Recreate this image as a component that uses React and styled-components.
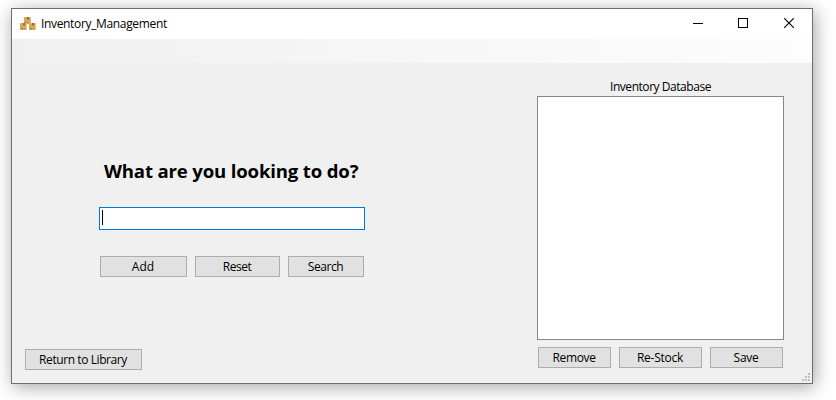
import React from "react";
import styled, { createGlobalStyle } from "styled-components";

const GlobalStyle = createGlobalStyle`
  *, *::before, *::after { box-sizing: border-box; }
  body {
    margin: 0;
    background: #fff;
    overflow: hidden;
    color: #000;
    font: 12px/16px "Open Sans", "Noto Sans", sans-serif;
  }
`;

const Desktop = styled.div`
  width: 836px;
  height: 400px;
  padding: 8px 0 0 11px;
  overflow: hidden;
`;

const Window = styled.main`
  display: flex;
  flex-direction: column;
  width: 802px;
  height: 376px;
  border: 1px solid #6d6e6f;
  background: #f0f0f0;
  box-shadow: 2px 3px 17px rgba(0, 0, 0, 0.36);
`;

const TitleBar = styled.header`
  display: flex;
  align-items: flex-start;
  height: 30px;
  background: #fff;
`;

const AppIcon = styled.svg`
  flex: none;
  width: 16px;
  height: 16px;
  margin: 7px 5px 0 8px;
`;

const Title = styled.span`
  flex: 1;
  padding-top: 7px;
  white-space: nowrap;
  letter-spacing: ${(p) => p.$spacing}px;
`;

const WindowControl = styled.button`
  display: flex;
  align-items: flex-start;
  width: ${(p) => p.$width}px;
  height: 30px;
  padding: 9px 0 0 18px;
  border: 0;
  background: transparent;

  svg { display: block; flex: none; }
`;

const MenuStrip = styled.nav`
  height: 24px;
  background: linear-gradient(90deg, #f0f0f0, #fdfdfd);
`;

const Body = styled.section`
  flex: 1;
  display: flex;
  justify-content: space-between;
  padding: 0 28px 13px 13px;
`;

const ActionPane = styled.div`
  display: flex;
  flex-direction: column;
  justify-content: space-between;
  align-items: flex-start;
`;

const SearchForm = styled.div`
  margin-left: 74px;
  padding-top: 96px;
  width: 266px;
`;

const Heading = styled.h1`
  margin: 0 0 0 5px;
  height: 48px;
  font: bold 18.6px/24px "Open Sans", "Noto Sans", sans-serif;
  letter-spacing: ${(p) => p.$spacing}px;
  white-space: nowrap;
`;

const SearchField = styled.div`
  height: 23px;
  padding: 2px;
  border: 1px solid #0078d7;
  background: #fff;
`;

const Caret = styled.div`
  width: 1px;
  height: 15px;
  background: #000;
`;

const ButtonRow = styled.div`
  display: flex;
  gap: 8px;
  margin: ${(p) => p.$top}px 0 0 1px;
`;

const Button = styled.button`
  flex: none;
  width: ${(p) => p.$width}px;
  height: 21px;
  padding: 1px 1px 0 0;
  border: 1px solid #adadad;
  background: #e1e1e1;
  color: #000;
  font: inherit;
  line-height: 18px;
  letter-spacing: ${(p) => p.$spacing || 0}px;
  white-space: nowrap;
`;

const DatabasePane = styled.div`
  width: 247px;
  padding-top: 16px;
`;

const ListLabel = styled.div`
  height: 17px;
  text-align: center;
  letter-spacing: ${(p) => p.$spacing}px;
`;

const ListBox = styled.div`
  height: 244px;
  border: 1px solid #828790;
  background: #fff;
`;

const ResizeGrip = styled.svg`
  align-self: flex-end;
  flex: none;
  width: 8px;
  height: 8px;
  margin: -10px 2px 2px 0;
`;

const Box = ({ x, y }) => (
  <g transform={`translate(${x} ${y})`} shapeRendering="crispEdges">
    <rect width="7" height="7" fill="#d8a858" />
    <rect width="7" height="1" fill="#dcb26c" />
    <rect x="6" width="1" height="7" fill="#e6c189" />
    <rect x="3" width="2" height="2" fill="#94682f" />
    <rect x="3" y="2" width="2" height="1" fill="#bb8a45" />
    <rect x="1" y="5" width="2" height="1" fill="#85827c" />
    <rect x="4" y="5" width="1" height="1" fill="#c19657" />
  </g>
);

export default function App() {
  return (
    <Desktop>
      <GlobalStyle />
      <Window>
        <TitleBar>
          <AppIcon viewBox="0 0 16 16">
            <Box x={4} y={1} />
            <Box x={0} y={7} />
            <Box x={9} y={7} />
          </AppIcon>
          <Title $spacing={-0.34}>Inventory_Management</Title>
          <WindowControl $width={45} aria-label="Minimize">
            <svg width="10" height="10"><path d="M0 5.5h10" stroke="#000" /></svg>
          </WindowControl>
          <WindowControl $width={46} aria-label="Maximize">
            <svg width="10" height="10"><path d="M.5.5h9v9h-9z" fill="none" stroke="#000" shapeRendering="crispEdges" /></svg>
          </WindowControl>
          <WindowControl $width={46} aria-label="Close">
            <svg width="10" height="10"><path d="M0 0l10 10M10 0L0 10" stroke="#000" strokeWidth="1.1" /></svg>
          </WindowControl>
        </TitleBar>
        <MenuStrip />
        <Body>
          <ActionPane>
            <SearchForm>
              <Heading $spacing={-0.17}>What are you looking to do?</Heading>
              <SearchField><Caret /></SearchField>
              <ButtonRow $top={26}>
                <Button $width={87}>Add</Button>
                <Button $width={85} $spacing={-0.5}>Reset</Button>
                <Button $width={76} $spacing={-0.45}>Search</Button>
              </ButtonRow>
            </SearchForm>
            <Button $width={117} $spacing={-0.42}>Return to Library</Button>
          </ActionPane>
          <DatabasePane>
            <ListLabel $spacing={-0.45}>Inventory Database</ListLabel>
            <ListBox />
            <ButtonRow $top={7}>
              <Button $width={73} $spacing={-0.35}>Remove</Button>
              <Button $width={83} $spacing={-0.25}>Re-Stock</Button>
              <Button $width={73} $spacing={-0.3}>Save</Button>
            </ButtonRow>
          </DatabasePane>
        </Body>
        <ResizeGrip viewBox="0 0 8 8" fill="#bfbfbf" shapeRendering="crispEdges">
          <path d="M6 0h2v2H6zM3 3h2v2H3zM6 3h2v2H6zM0 6h2v2H0zM3 6h2v2H3zM6 6h2v2H6z" />
        </ResizeGrip>
      </Window>
    </Desktop>
  );
}
